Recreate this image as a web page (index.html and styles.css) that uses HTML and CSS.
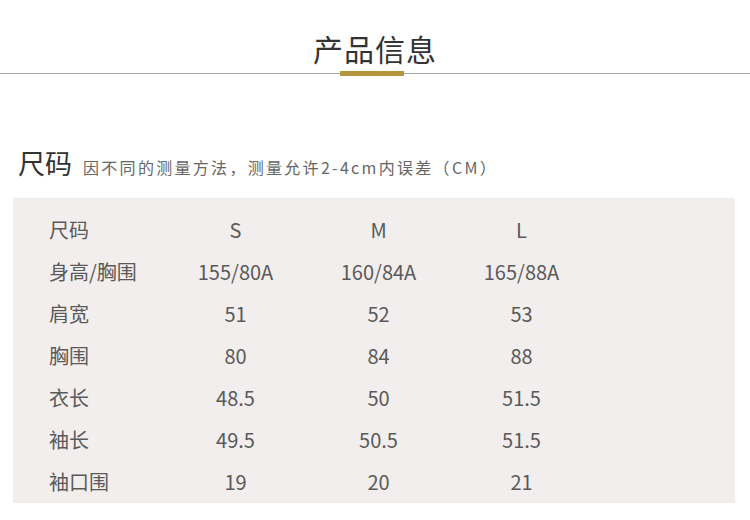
FILE: index.html
```html
<!DOCTYPE html>
<html lang="zh-CN">
<head>
<meta charset="utf-8">
<title>产品信息</title>
<link rel="stylesheet" href="styles.css">
</head>
<body>
<header class="hd">
  <h1 class="hd-title">产品信息</h1>
  <div class="hd-rule">
    <span class="hd-line hd-line-left"></span>
    <span class="hd-bar"></span>
    <span class="hd-line"></span>
  </div>
</header>
<section class="size">
  <div class="size-head">
    <h2 class="size-title">尺码</h2>
    <span class="size-note">因不同的测量方法，测量允许2-4cm内误差（CM）</span>
  </div>
  <div class="size-table">
    <div class="row"><span class="lbl">尺码</span><span class="val">S</span><span class="val">M</span><span class="val">L</span></div>
    <div class="row"><span class="lbl">身高/胸围</span><span class="val">155/80A</span><span class="val">160/84A</span><span class="val">165/88A</span></div>
    <div class="row"><span class="lbl">肩宽</span><span class="val">51</span><span class="val">52</span><span class="val">53</span></div>
    <div class="row"><span class="lbl">胸围</span><span class="val">80</span><span class="val">84</span><span class="val">88</span></div>
    <div class="row"><span class="lbl">衣长</span><span class="val">48.5</span><span class="val">50</span><span class="val">51.5</span></div>
    <div class="row"><span class="lbl">袖长</span><span class="val">49.5</span><span class="val">50.5</span><span class="val">51.5</span></div>
    <div class="row"><span class="lbl">袖口围</span><span class="val">19</span><span class="val">20</span><span class="val">21</span></div>
  </div>
</section>
</body>
</html>
```
FILE: styles.css
```css
* { box-sizing: border-box; }
html, body { margin: 0; padding: 0; background: #fff; }
body {
  width: 750px;
  font-family: "Noto Sans CJK SC", "Noto Sans", sans-serif;
  color: #333;
}
.hd { padding-top: 33px; }
.hd-title {
  margin: 0;
  text-align: center;
  font-size: 30px;
  line-height: 30px;
  font-weight: 400;
  color: #333;
  letter-spacing: 1px;
}
.hd-rule {
  display: flex;
  align-items: center;
  margin-top: 8px;
  height: 5px;
}
.hd-line { flex: 1; height: 1px; background: #a8a8a8; }
.hd-line-left { flex: 0 0 340px; }
.hd-bar { width: 64px; height: 5px; background: #b3963d; }
.size { padding-top: 72px; }
.size-head {
  display: flex;
  align-items: baseline;
  padding-left: 18px;
  height: 38px;
}
.size-title {
  margin: 0;
  font-size: 27px;
  line-height: 30px;
  font-weight: 400;
  color: #333;
}
.size-note {
  margin-left: 11px;
  font-size: 16px;
  letter-spacing: 2.3px;
  color: #666;
}
.size-table {
  margin: 12px 15px 0 13px;
  background: #f2eeed;
  padding: 10px 0 0 36px;
  height: 305px;
}
.row {
  display: grid;
  grid-template-columns: 115px 143px 143px 143px;
  height: 42px;
  align-items: center;
  font-size: 20px;
  color: #5a5a5a;
}
.val { text-align: center; }
```
